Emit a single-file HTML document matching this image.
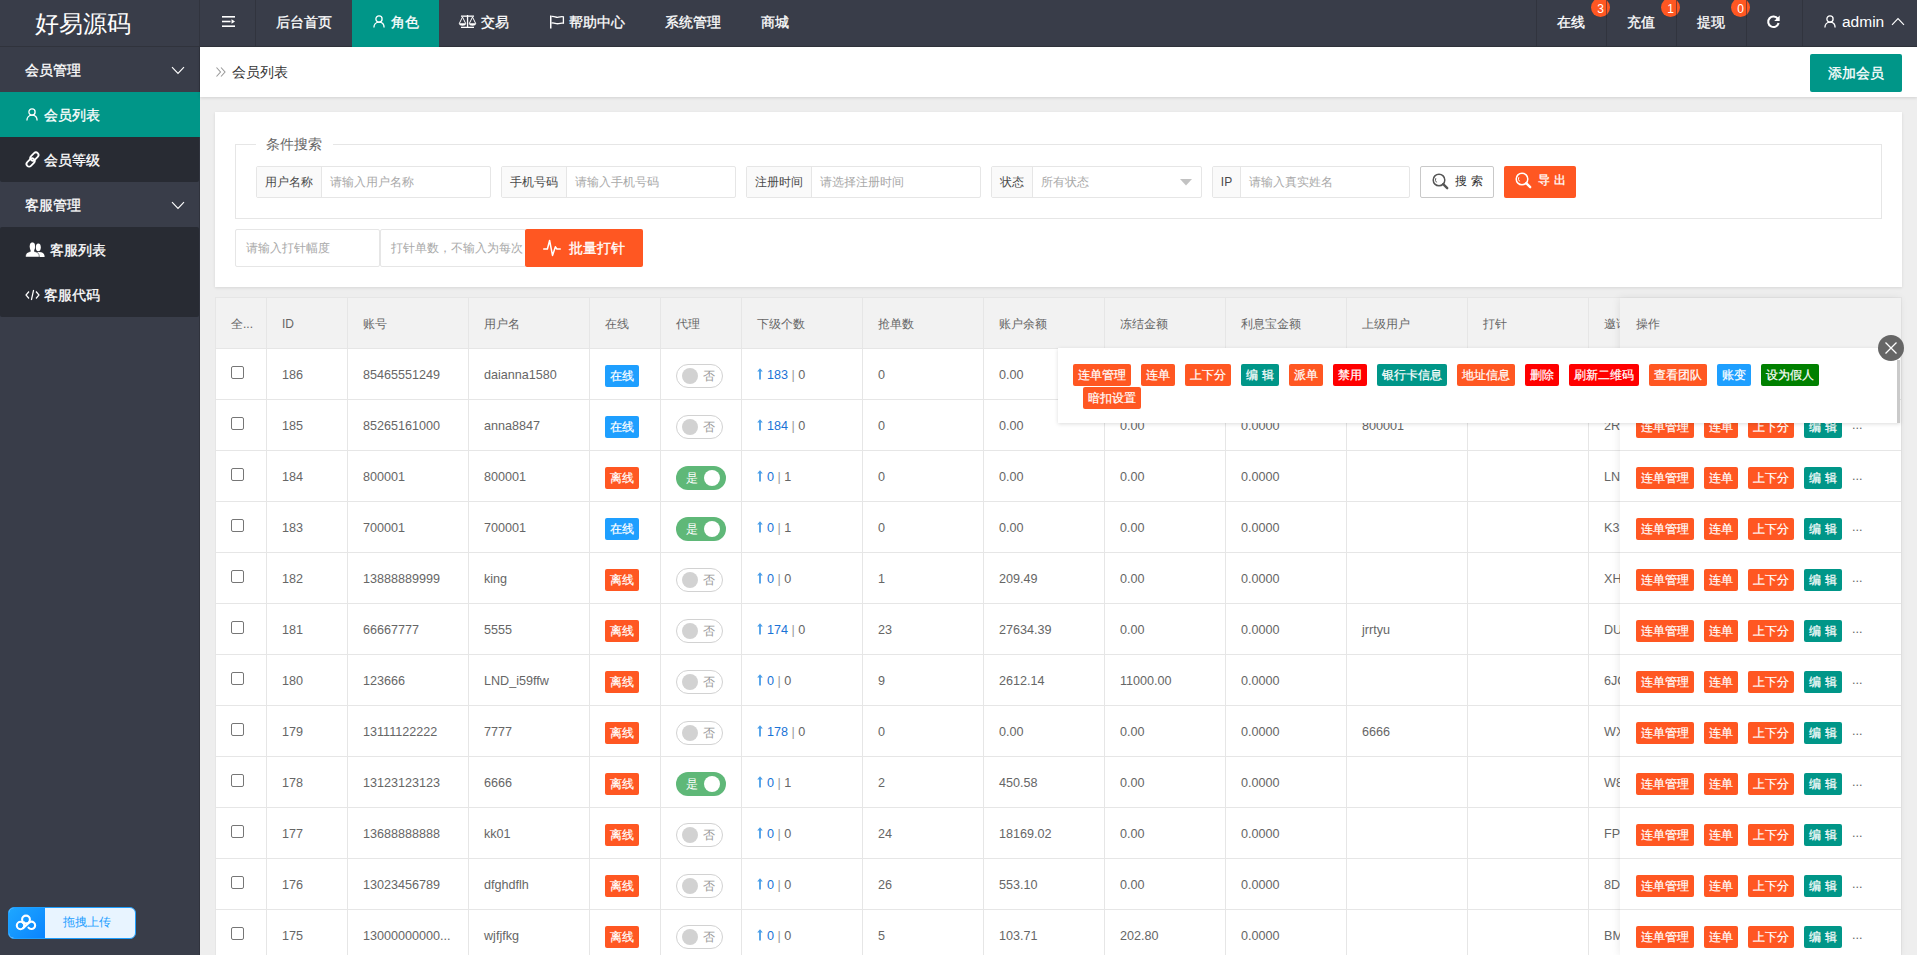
<!DOCTYPE html><html><head><meta charset="utf-8"><style>
*{box-sizing:border-box;margin:0;padding:0}
html,body{width:1917px;height:955px;overflow:hidden}
body{font-family:"Liberation Sans",sans-serif;font-size:14px;color:#666;background:#eeeeee;position:relative}
.A{position:absolute;white-space:nowrap}
.vl{position:absolute;top:0;width:1px;height:46px;background:#31343e}
.nt{position:absolute;color:#fff;font-size:14px;line-height:16px;white-space:nowrap;-webkit-text-stroke:0.3px #fff}
.bdg{position:absolute;top:-2px;width:19px;height:19px;border-radius:50%;background:#FF5722;color:#fff;font-size:12px;line-height:14px;padding-top:4px;text-align:center}
.si{position:absolute;left:0;width:199px;height:45px}
.st{position:absolute;color:#fff;font-size:14px;line-height:16px;white-space:nowrap;-webkit-text-stroke:0.3px #fff}
.inp{position:absolute;height:32px;border:1px solid #e6e6e6;border-radius:2px;background:#fff}
.lab{position:absolute;left:0;top:0;height:30px;background:#FAFAFA;border-right:1px solid #e6e6e6;color:#4a4a4a;font-size:12px;line-height:30px;text-align:center}
.ph{position:absolute;color:#a9a9a9;font-size:12px;line-height:30px;white-space:nowrap}
.hl{position:absolute;height:1px;background:#e6e6e6}
.vv{position:absolute;width:1px;background:#e6e6e6}
.td{position:absolute;font-size:12.6px;color:#666;line-height:16px;white-space:nowrap}
.th{position:absolute;font-size:12px;color:#666;line-height:16px;white-space:nowrap}
.cb{position:absolute;width:13px;height:13px;border:1px solid #767676;border-radius:2px;background:#fff}
.tag{position:absolute;width:34px;height:22px;border-radius:2px;color:#fff;font-size:12px;line-height:22px;text-align:center;-webkit-text-stroke:0.2px #fff}
.sw{position:absolute;height:24px;border-radius:12px}
.sw.off{border:1px solid #d2d2d2;background:#fff}
.sw.on{background:#5FB878}
.knob{position:absolute;width:16px;height:16px;border-radius:50%;top:4px}
.swt{position:absolute;font-size:12px;line-height:14px;top:5px}
.btn{position:absolute;height:22px;border-radius:2px;color:#fff;font-size:12px;line-height:22px;text-align:center;white-space:nowrap;-webkit-text-stroke:0.2px #fff}
.o{background:#FF5722}.g{background:#009688}.r{background:#FF0000}.b{background:#1E9FFF}.dg{background:#008000}
</style></head><body>
<div class="A" style="left:0;top:0;width:1917px;height:47px;background:#393D49;border-bottom:1px solid #30333c"></div>
<div class="A" style="left:35px;top:11px;color:#fff;font-size:24px;line-height:26px">好易源码</div>
<div class="vl" style="left:199px"></div>
<div class="vl" style="left:255px"></div>
<div class="vl" style="left:1536px"></div>
<div class="vl" style="left:1606px"></div>
<div class="vl" style="left:1676px"></div>
<div class="vl" style="left:1746px"></div>
<div class="vl" style="left:1802px"></div>
<svg class="A" style="left:221px;top:15px" width="15" height="13" viewBox="0 0 15 13"><rect x="1" y="1" width="13" height="1.6" fill="#fff"/><rect x="1" y="5.7" width="8.5" height="1.6" fill="#fff"/><path d="M10.5 4.2 L14 6.5 L10.5 8.8Z" fill="#fff"/><rect x="1" y="10.4" width="13" height="1.6" fill="#fff"/></svg>
<div class="A" style="left:352px;top:0;width:87px;height:47px;background:#009688"></div>
<div class="nt" style="left:276px;top:14px">后台首页</div>
<svg class="A" style="left:373px;top:15px" width="12" height="13" viewBox="0 0 12 13"><circle cx="6" cy="4" r="3.1" fill="none" stroke="#fff" stroke-width="1.3"/><path d="M0.9 12.6 C0.9 9.2 3 7.2 6 7.2 C9 7.2 11.1 9.2 11.1 12.6" fill="none" stroke="#fff" stroke-width="1.3"/></svg>
<div class="nt" style="left:391px;top:14px">角色</div>
<svg class="A" style="left:458px;top:14px" width="19" height="15" viewBox="0 0 19 15"><rect x="3" y="1.5" width="13" height="1.3" fill="#fff"/><rect x="8.9" y="1" width="1.3" height="12.5" fill="#fff"/><rect x="3" y="12.7" width="13" height="1.3" fill="#fff"/><path d="M4.5 3 L1.3 9.5 M4.5 3 L7.7 9.5 M14.5 3 L11.3 9.5 M14.5 3 L17.7 9.5" stroke="#fff" stroke-width="1" fill="none"/><path d="M0.8 9.3 H8.2 C8 11 6.5 11.8 4.5 11.8 C2.5 11.8 1 11 0.8 9.3Z M10.8 9.3 H18.2 C18 11 16.5 11.8 14.5 11.8 C12.5 11.8 11 11 10.8 9.3Z" fill="#fff"/></svg>
<div class="nt" style="left:481px;top:14px">交易</div>
<svg class="A" style="left:549px;top:15px" width="16" height="14" viewBox="0 0 16 14"><rect x="1" y="0.5" width="1.5" height="13" fill="#fff"/><path d="M2.5 1.6 C5 0.5 7 3 9.5 2.2 C11 1.8 12.5 1.5 14.4 1.8 V8.2 C12.5 7.8 11 8.2 9.5 8.6 C7 9.4 5 7 2.5 8.1" fill="none" stroke="#fff" stroke-width="1.3"/></svg>
<div class="nt" style="left:569px;top:14px">帮助中心</div>
<div class="nt" style="left:665px;top:14px">系统管理</div>
<div class="nt" style="left:761px;top:14px">商城</div>
<div class="nt" style="left:1557px;top:14px">在线</div>
<div class="bdg" style="left:1591px">3</div>
<div class="nt" style="left:1627px;top:14px">充值</div>
<div class="bdg" style="left:1661px">1</div>
<div class="nt" style="left:1697px;top:14px">提现</div>
<div class="bdg" style="left:1731px">0</div>
<div class="vl" style="left:1606px;top:0;height:18px;background:rgba(40,43,52,.55)"></div>
<div class="vl" style="left:1676px;top:0;height:18px;background:rgba(40,43,52,.55)"></div>
<div class="vl" style="left:1746px;top:0;height:18px;background:rgba(40,43,52,.55)"></div>
<svg class="A" style="left:1766px;top:14px" width="15" height="15" viewBox="0 0 16 16"><path d="M12.6 5.2 A5.6 5.6 0 1 0 13.4 9.6" fill="none" stroke="#fff" stroke-width="2.2"/><path d="M14.6 1.5 V7.4 H8.7Z" fill="#fff"/></svg>
<svg class="A" style="left:1824px;top:15px" width="12" height="13" viewBox="0 0 12 13"><circle cx="6" cy="4" r="3.1" fill="none" stroke="#fff" stroke-width="1.3"/><path d="M0.9 12.6 C0.9 9.2 3 7.2 6 7.2 C9 7.2 11.1 9.2 11.1 12.6" fill="none" stroke="#fff" stroke-width="1.3"/></svg>
<div class="A" style="left:1842px;top:13px;color:#fff;font-size:15.5px;line-height:18px">admin</div>
<svg class="A" style="left:1891px;top:17px" width="14" height="9" viewBox="0 0 14 9"><path d="M1 7.8 L7 1.6 L13 7.8" fill="none" stroke="#fff" stroke-width="1.15"/></svg>
<div class="A" style="left:0;top:47px;width:199px;height:908px;background:#393D49"></div>
<div class="A" style="left:199px;top:47px;width:1px;height:908px;background:#30333d"></div>
<div class="si" style="top:92px;width:200px;background:#009688"></div>
<div class="si" style="top:137px;background:#282B33;border-radius:0 0 2px 2px"></div>
<div class="si" style="top:227px;height:90px;background:#282B33;border-radius:2px"></div>
<div class="st" style="left:25px;top:62px">会员管理</div>
<div class="st" style="left:44px;top:107px">会员列表</div>
<div class="st" style="left:44px;top:152px">会员等级</div>
<div class="st" style="left:25px;top:197px">客服管理</div>
<div class="st" style="left:50px;top:242px">客服列表</div>
<div class="st" style="left:44px;top:287px">客服代码</div>
<svg class="A" style="left:171px;top:66px" width="14" height="9" viewBox="0 0 14 9"><path d="M1 1.2 L7 7.4 L13 1.2" fill="none" stroke="#fff" stroke-width="1.15"/></svg>
<svg class="A" style="left:171px;top:201px" width="14" height="9" viewBox="0 0 14 9"><path d="M1 1.2 L7 7.4 L13 1.2" fill="none" stroke="#fff" stroke-width="1.15"/></svg>
<svg class="A" style="left:26px;top:108px" width="12" height="13" viewBox="0 0 12 13"><circle cx="6" cy="4" r="3.1" fill="none" stroke="#fff" stroke-width="1.3"/><path d="M0.9 12.6 C0.9 9.2 3 7.2 6 7.2 C9 7.2 11.1 9.2 11.1 12.6" fill="none" stroke="#fff" stroke-width="1.3"/></svg>
<svg class="A" style="left:24px;top:150.5px;overflow:visible" width="17" height="17" viewBox="0 0 17 17"><g fill="none" stroke="#fff" stroke-width="1.8" transform="rotate(-45 8.5 8.5)"><rect x="0.3" y="6.7" width="9.4" height="5.2" rx="2.6"/><rect x="7.3" y="5.1" width="9.4" height="5.2" rx="2.6"/></g></svg>
<svg class="A" style="left:25px;top:242px" width="20" height="16" viewBox="0 0 20 16"><ellipse cx="13.3" cy="5.3" rx="2.5" ry="3.9" fill="#fff"/><path d="M9.5 15 C9.5 11.6 11 9.9 14 9.9 C18 9.9 19.6 11.6 19.6 15Z" fill="#fff"/><ellipse cx="7.4" cy="4.6" rx="2.7" ry="4.1" fill="#fff" stroke="#282B33" stroke-width="0.7"/><path d="M0.5 15.1 C0.5 11.4 2.3 9.4 7.4 9.4 C12.5 9.4 14.3 11.4 14.3 15.1Z" fill="#fff" stroke="#282B33" stroke-width="0.6"/><ellipse cx="7.4" cy="4.6" rx="2.6" ry="4" fill="#fff"/><rect x="5.6" y="7" width="3.6" height="3.5" fill="#fff"/></svg>
<svg class="A" style="left:25px;top:289px" width="15" height="12" viewBox="0 0 15 12"><path d="M4 2.5 L1 6 L4 9.5 M11 2.5 L14 6 L11 9.5 M8.6 1 L6.4 11" fill="none" stroke="#fff" stroke-width="1.2"/></svg>
<div class="A" style="left:8px;top:907px;width:128px;height:32px;border:1px solid #1E9FFF;border-radius:6px;background:#E8F4FF;overflow:hidden"><div class="A" style="left:0;top:0;width:36px;height:30px;background:linear-gradient(135deg,#1EA7FF,#0A84FF)"></div></div>
<svg class="A" style="left:10px;top:908px" width="34" height="30" viewBox="0 0 34 30"><g fill="none" stroke="#fff" stroke-width="2.1" stroke-linecap="round"><circle cx="16" cy="11.5" r="3.9"/><circle cx="10.5" cy="17.5" r="3.7"/><path d="M18.5 19.6 A3.7 3.7 0 1 0 18.3 15.4 L13.1 20.1"/><path d="M12.6 14.8 L14.2 14.2 M19.2 13.6 L19.8 14.6" stroke-width="1.6"/></g></svg>
<div class="A" style="left:63px;top:915px;color:#1E9FFF;font-size:12px;line-height:14px">拖拽上传</div>
<div class="A" style="left:200px;top:47px;width:1717px;height:50px;background:#fff;box-shadow:0 1px 3px rgba(0,0,0,.12)"></div>
<svg class="A" style="left:215px;top:66px" width="12" height="12" viewBox="0 0 12 12"><path d="M1.5 1.5 L5.5 6 L1.5 10.5 M6 1.5 L10 6 L6 10.5" fill="none" stroke="#999" stroke-width="1.1"/></svg>
<div class="A" style="left:232px;top:64px;color:#333;font-size:14px;line-height:16px">会员列表</div>
<div class="A g" style="left:1810px;top:54px;width:92px;height:38px;border-radius:2px;color:#fff;font-size:14px;line-height:38px;text-align:center;-webkit-text-stroke:0.3px #fff">添加会员</div>
<div class="A" style="left:215px;top:112px;width:1687px;height:175px;background:#fff;box-shadow:0 1px 3px rgba(0,0,0,.1)"></div>
<div class="A" style="left:235px;top:144px;width:1647px;height:75px;border:1px solid #e6e6e6"></div>
<div class="A" style="left:256px;top:136px;width:77px;height:16px;background:#fff"></div>
<div class="A" style="left:266px;top:136px;color:#666;font-size:14px;line-height:16px">条件搜索</div>
<div class="inp" style="left:256px;top:166px;width:235px"><div class="lab" style="width:65px">用户名称</div><div class="ph" style="left:73px;top:0">请输入用户名称</div></div>
<div class="inp" style="left:501px;top:166px;width:235px"><div class="lab" style="width:65px">手机号码</div><div class="ph" style="left:73px;top:0">请输入手机号码</div></div>
<div class="inp" style="left:746px;top:166px;width:235px"><div class="lab" style="width:65px">注册时间</div><div class="ph" style="left:73px;top:0">请选择注册时间</div></div>
<div class="inp" style="left:991px;top:166px;width:211px"><div class="lab" style="width:41px">状态</div><div class="ph" style="left:49px;top:0">所有状态</div></div>
<svg class="A" style="left:1180px;top:179px" width="12" height="7" viewBox="0 0 12 7"><path d="M0 0 H12 L6 6.5Z" fill="#c2c2c2"/></svg>
<div class="inp" style="left:1212px;top:166px;width:198px"><div class="lab" style="width:28px">IP</div><div class="ph" style="left:36px;top:0">请输入真实姓名</div></div>
<div class="A" style="left:1420px;top:166px;width:74px;height:32px;border:1px solid #c9c9c9;border-radius:2px;background:#fff"></div>
<svg class="A" style="left:1432px;top:173px" width="17" height="17" viewBox="0 0 17 17"><g fill="none" stroke="#555"><circle cx="7" cy="7" r="5.8" stroke-width="1.5"/><path d="M3.8 5.2 A3.6 3.6 0 0 0 4.6 9.4" stroke-width="1"/><path d="M11.2 11.2 L15.2 15.2" stroke-width="2.4" stroke-linecap="round"/></g></svg>
<div class="A" style="left:1455px;top:174px;color:#333;font-size:12px;line-height:14px;letter-spacing:4px">搜索</div>
<div class="A o" style="left:1504px;top:166px;width:72px;height:32px;border-radius:2px"></div>
<svg class="A" style="left:1515px;top:172px" width="17" height="17" viewBox="0 0 17 17"><g fill="none" stroke="#fff"><circle cx="7" cy="7" r="5.8" stroke-width="1.5"/><path d="M3.8 5.2 A3.6 3.6 0 0 0 4.6 9.4" stroke-width="1"/><path d="M11.2 11.2 L15.2 15.2" stroke-width="2.4" stroke-linecap="round"/></g></svg>
<div class="A" style="left:1538px;top:173px;color:#fff;font-size:12px;line-height:14px;letter-spacing:4px;-webkit-text-stroke:0.3px #fff">导出</div>
<div class="A" style="left:235px;top:229px;width:145px;height:38px;border:1px solid #e6e6e6;border-radius:2px;background:#fff"></div>
<div class="A" style="left:246px;top:241px;color:#a9a9a9;font-size:12px;line-height:14px">请输入打针幅度</div>
<div class="A" style="left:380px;top:229px;width:146px;height:38px;border:1px solid #e6e6e6;border-radius:2px;background:#fff;overflow:hidden"><div class="A" style="left:10px;top:11px;color:#a9a9a9;font-size:12px;line-height:14px">打针单数，不输入为每次</div></div>
<div class="A o" style="left:525px;top:229px;width:118px;height:38px;border-radius:2px"></div>
<svg class="A" style="left:543px;top:239px" width="18" height="18" viewBox="0 0 18 18"><path d="M0.7 10 H4.4 L6.6 1.5 L9.5 16.4 L12.4 7.8 L13.9 10 H17.3" fill="none" stroke="#fff" stroke-width="1.5" stroke-linejoin="round" stroke-linecap="round"/></svg>
<div class="A" style="left:569px;top:240px;color:#fff;font-size:14px;line-height:16px;-webkit-text-stroke:0.3px #fff">批量打针</div>
<div class="A" style="left:215px;top:297px;width:1687px;height:658px;background:#fff;border:1px solid #e6e6e6;border-bottom:none"></div>
<div class="A" style="left:216px;top:298px;width:1685px;height:50px;background:#F2F2F2"></div>
<div class="vv" style="left:266px;top:298px;height:658px"></div>
<div class="vv" style="left:347px;top:298px;height:658px"></div>
<div class="vv" style="left:468px;top:298px;height:658px"></div>
<div class="vv" style="left:589px;top:298px;height:658px"></div>
<div class="vv" style="left:660px;top:298px;height:658px"></div>
<div class="vv" style="left:741px;top:298px;height:658px"></div>
<div class="vv" style="left:862px;top:298px;height:658px"></div>
<div class="vv" style="left:983px;top:298px;height:658px"></div>
<div class="vv" style="left:1104px;top:298px;height:658px"></div>
<div class="vv" style="left:1225px;top:298px;height:658px"></div>
<div class="vv" style="left:1346px;top:298px;height:658px"></div>
<div class="vv" style="left:1467px;top:298px;height:658px"></div>
<div class="vv" style="left:1588px;top:298px;height:658px"></div>
<div class="hl" style="left:216px;top:348px;width:1685px"></div>
<div class="hl" style="left:216px;top:399px;width:1685px"></div>
<div class="hl" style="left:216px;top:450px;width:1685px"></div>
<div class="hl" style="left:216px;top:501px;width:1685px"></div>
<div class="hl" style="left:216px;top:552px;width:1685px"></div>
<div class="hl" style="left:216px;top:603px;width:1685px"></div>
<div class="hl" style="left:216px;top:654px;width:1685px"></div>
<div class="hl" style="left:216px;top:705px;width:1685px"></div>
<div class="hl" style="left:216px;top:756px;width:1685px"></div>
<div class="hl" style="left:216px;top:807px;width:1685px"></div>
<div class="hl" style="left:216px;top:858px;width:1685px"></div>
<div class="hl" style="left:216px;top:909px;width:1685px"></div>
<div class="th" style="left:231px;top:316px">全...</div>
<div class="th" style="left:282px;top:316px">ID</div>
<div class="th" style="left:363px;top:316px">账号</div>
<div class="th" style="left:484px;top:316px">用户名</div>
<div class="th" style="left:605px;top:316px">在线</div>
<div class="th" style="left:676px;top:316px">代理</div>
<div class="th" style="left:757px;top:316px">下级个数</div>
<div class="th" style="left:878px;top:316px">抢单数</div>
<div class="th" style="left:999px;top:316px">账户余额</div>
<div class="th" style="left:1120px;top:316px">冻结金额</div>
<div class="th" style="left:1241px;top:316px">利息宝金额</div>
<div class="th" style="left:1362px;top:316px">上级用户</div>
<div class="th" style="left:1483px;top:316px">打针</div>
<div class="th" style="left:1604px;top:316px">邀请码</div>
<div class="cb" style="left:231px;top:366px"></div>
<div class="td" style="left:282px;top:367px">186</div>
<div class="td" style="left:363px;top:367px">85465551249</div>
<div class="td" style="left:484px;top:367px">daianna1580</div>
<div class="td" style="left:878px;top:367px">0</div>
<div class="td" style="left:999px;top:367px">0.00</div>
<div class="td" style="left:1120px;top:367px">0.00</div>
<div class="td" style="left:1241px;top:367px">0.0000</div>
<div class="td" style="left:1604px;top:367px">Y2</div>
<div class="tag b" style="left:605px;top:365px">在线</div>
<div class="sw off" style="left:676px;top:364px;width:47px"><div class="knob" style="left:5px;top:3px;background:#d2d2d2"></div><div class="swt" style="left:26px;top:4px;color:#999">否</div></div>
<svg class="A" style="left:757px;top:368px" width="6" height="12" viewBox="0 0 6 12"><path d="M3 0.3 L5.8 3.6 H3.9 V11.5 H2.1 V3.6 H0.2Z" fill="#4a9ee8"/></svg>
<div class="td" style="left:767px;top:367px"><span style="color:#1a73d6">183</span> <span style="color:#999">|</span> 0</div>
<div class="cb" style="left:231px;top:417px"></div>
<div class="td" style="left:282px;top:418px">185</div>
<div class="td" style="left:363px;top:418px">85265161000</div>
<div class="td" style="left:484px;top:418px">anna8847</div>
<div class="td" style="left:878px;top:418px">0</div>
<div class="td" style="left:999px;top:418px">0.00</div>
<div class="td" style="left:1120px;top:418px">0.00</div>
<div class="td" style="left:1241px;top:418px">0.0000</div>
<div class="td" style="left:1362px;top:418px">800001</div>
<div class="td" style="left:1604px;top:418px">2R</div>
<div class="tag b" style="left:605px;top:416px">在线</div>
<div class="sw off" style="left:676px;top:415px;width:47px"><div class="knob" style="left:5px;top:3px;background:#d2d2d2"></div><div class="swt" style="left:26px;top:4px;color:#999">否</div></div>
<svg class="A" style="left:757px;top:419px" width="6" height="12" viewBox="0 0 6 12"><path d="M3 0.3 L5.8 3.6 H3.9 V11.5 H2.1 V3.6 H0.2Z" fill="#4a9ee8"/></svg>
<div class="td" style="left:767px;top:418px"><span style="color:#1a73d6">184</span> <span style="color:#999">|</span> 0</div>
<div class="cb" style="left:231px;top:468px"></div>
<div class="td" style="left:282px;top:469px">184</div>
<div class="td" style="left:363px;top:469px">800001</div>
<div class="td" style="left:484px;top:469px">800001</div>
<div class="td" style="left:878px;top:469px">0</div>
<div class="td" style="left:999px;top:469px">0.00</div>
<div class="td" style="left:1120px;top:469px">0.00</div>
<div class="td" style="left:1241px;top:469px">0.0000</div>
<div class="td" style="left:1604px;top:469px">LN</div>
<div class="tag o" style="left:605px;top:467px">离线</div>
<div class="sw on" style="left:676px;top:466px;width:50px"><div class="swt" style="left:10px;color:#fff">是</div><div class="knob" style="left:28px;background:#fff"></div></div>
<svg class="A" style="left:757px;top:470px" width="6" height="12" viewBox="0 0 6 12"><path d="M3 0.3 L5.8 3.6 H3.9 V11.5 H2.1 V3.6 H0.2Z" fill="#4a9ee8"/></svg>
<div class="td" style="left:767px;top:469px"><span style="color:#1a73d6">0</span> <span style="color:#999">|</span> 1</div>
<div class="cb" style="left:231px;top:519px"></div>
<div class="td" style="left:282px;top:520px">183</div>
<div class="td" style="left:363px;top:520px">700001</div>
<div class="td" style="left:484px;top:520px">700001</div>
<div class="td" style="left:878px;top:520px">0</div>
<div class="td" style="left:999px;top:520px">0.00</div>
<div class="td" style="left:1120px;top:520px">0.00</div>
<div class="td" style="left:1241px;top:520px">0.0000</div>
<div class="td" style="left:1604px;top:520px">K3</div>
<div class="tag b" style="left:605px;top:518px">在线</div>
<div class="sw on" style="left:676px;top:517px;width:50px"><div class="swt" style="left:10px;color:#fff">是</div><div class="knob" style="left:28px;background:#fff"></div></div>
<svg class="A" style="left:757px;top:521px" width="6" height="12" viewBox="0 0 6 12"><path d="M3 0.3 L5.8 3.6 H3.9 V11.5 H2.1 V3.6 H0.2Z" fill="#4a9ee8"/></svg>
<div class="td" style="left:767px;top:520px"><span style="color:#1a73d6">0</span> <span style="color:#999">|</span> 1</div>
<div class="cb" style="left:231px;top:570px"></div>
<div class="td" style="left:282px;top:571px">182</div>
<div class="td" style="left:363px;top:571px">13888889999</div>
<div class="td" style="left:484px;top:571px">king</div>
<div class="td" style="left:878px;top:571px">1</div>
<div class="td" style="left:999px;top:571px">209.49</div>
<div class="td" style="left:1120px;top:571px">0.00</div>
<div class="td" style="left:1241px;top:571px">0.0000</div>
<div class="td" style="left:1604px;top:571px">XH</div>
<div class="tag o" style="left:605px;top:569px">离线</div>
<div class="sw off" style="left:676px;top:568px;width:47px"><div class="knob" style="left:5px;top:3px;background:#d2d2d2"></div><div class="swt" style="left:26px;top:4px;color:#999">否</div></div>
<svg class="A" style="left:757px;top:572px" width="6" height="12" viewBox="0 0 6 12"><path d="M3 0.3 L5.8 3.6 H3.9 V11.5 H2.1 V3.6 H0.2Z" fill="#4a9ee8"/></svg>
<div class="td" style="left:767px;top:571px"><span style="color:#1a73d6">0</span> <span style="color:#999">|</span> 0</div>
<div class="cb" style="left:231px;top:621px"></div>
<div class="td" style="left:282px;top:622px">181</div>
<div class="td" style="left:363px;top:622px">66667777</div>
<div class="td" style="left:484px;top:622px">5555</div>
<div class="td" style="left:878px;top:622px">23</div>
<div class="td" style="left:999px;top:622px">27634.39</div>
<div class="td" style="left:1120px;top:622px">0.00</div>
<div class="td" style="left:1241px;top:622px">0.0000</div>
<div class="td" style="left:1362px;top:622px">jrrtyu</div>
<div class="td" style="left:1604px;top:622px">DU</div>
<div class="tag o" style="left:605px;top:620px">离线</div>
<div class="sw off" style="left:676px;top:619px;width:47px"><div class="knob" style="left:5px;top:3px;background:#d2d2d2"></div><div class="swt" style="left:26px;top:4px;color:#999">否</div></div>
<svg class="A" style="left:757px;top:623px" width="6" height="12" viewBox="0 0 6 12"><path d="M3 0.3 L5.8 3.6 H3.9 V11.5 H2.1 V3.6 H0.2Z" fill="#4a9ee8"/></svg>
<div class="td" style="left:767px;top:622px"><span style="color:#1a73d6">174</span> <span style="color:#999">|</span> 0</div>
<div class="cb" style="left:231px;top:672px"></div>
<div class="td" style="left:282px;top:673px">180</div>
<div class="td" style="left:363px;top:673px">123666</div>
<div class="td" style="left:484px;top:673px">LND_i59ffw</div>
<div class="td" style="left:878px;top:673px">9</div>
<div class="td" style="left:999px;top:673px">2612.14</div>
<div class="td" style="left:1120px;top:673px">11000.00</div>
<div class="td" style="left:1241px;top:673px">0.0000</div>
<div class="td" style="left:1604px;top:673px">6JC</div>
<div class="tag o" style="left:605px;top:671px">离线</div>
<div class="sw off" style="left:676px;top:670px;width:47px"><div class="knob" style="left:5px;top:3px;background:#d2d2d2"></div><div class="swt" style="left:26px;top:4px;color:#999">否</div></div>
<svg class="A" style="left:757px;top:674px" width="6" height="12" viewBox="0 0 6 12"><path d="M3 0.3 L5.8 3.6 H3.9 V11.5 H2.1 V3.6 H0.2Z" fill="#4a9ee8"/></svg>
<div class="td" style="left:767px;top:673px"><span style="color:#1a73d6">0</span> <span style="color:#999">|</span> 0</div>
<div class="cb" style="left:231px;top:723px"></div>
<div class="td" style="left:282px;top:724px">179</div>
<div class="td" style="left:363px;top:724px">13111122222</div>
<div class="td" style="left:484px;top:724px">7777</div>
<div class="td" style="left:878px;top:724px">0</div>
<div class="td" style="left:999px;top:724px">0.00</div>
<div class="td" style="left:1120px;top:724px">0.00</div>
<div class="td" style="left:1241px;top:724px">0.0000</div>
<div class="td" style="left:1362px;top:724px">6666</div>
<div class="td" style="left:1604px;top:724px">WX</div>
<div class="tag o" style="left:605px;top:722px">离线</div>
<div class="sw off" style="left:676px;top:721px;width:47px"><div class="knob" style="left:5px;top:3px;background:#d2d2d2"></div><div class="swt" style="left:26px;top:4px;color:#999">否</div></div>
<svg class="A" style="left:757px;top:725px" width="6" height="12" viewBox="0 0 6 12"><path d="M3 0.3 L5.8 3.6 H3.9 V11.5 H2.1 V3.6 H0.2Z" fill="#4a9ee8"/></svg>
<div class="td" style="left:767px;top:724px"><span style="color:#1a73d6">178</span> <span style="color:#999">|</span> 0</div>
<div class="cb" style="left:231px;top:774px"></div>
<div class="td" style="left:282px;top:775px">178</div>
<div class="td" style="left:363px;top:775px">13123123123</div>
<div class="td" style="left:484px;top:775px">6666</div>
<div class="td" style="left:878px;top:775px">2</div>
<div class="td" style="left:999px;top:775px">450.58</div>
<div class="td" style="left:1120px;top:775px">0.00</div>
<div class="td" style="left:1241px;top:775px">0.0000</div>
<div class="td" style="left:1604px;top:775px">W8</div>
<div class="tag o" style="left:605px;top:773px">离线</div>
<div class="sw on" style="left:676px;top:772px;width:50px"><div class="swt" style="left:10px;color:#fff">是</div><div class="knob" style="left:28px;background:#fff"></div></div>
<svg class="A" style="left:757px;top:776px" width="6" height="12" viewBox="0 0 6 12"><path d="M3 0.3 L5.8 3.6 H3.9 V11.5 H2.1 V3.6 H0.2Z" fill="#4a9ee8"/></svg>
<div class="td" style="left:767px;top:775px"><span style="color:#1a73d6">0</span> <span style="color:#999">|</span> 1</div>
<div class="cb" style="left:231px;top:825px"></div>
<div class="td" style="left:282px;top:826px">177</div>
<div class="td" style="left:363px;top:826px">13688888888</div>
<div class="td" style="left:484px;top:826px">kk01</div>
<div class="td" style="left:878px;top:826px">24</div>
<div class="td" style="left:999px;top:826px">18169.02</div>
<div class="td" style="left:1120px;top:826px">0.00</div>
<div class="td" style="left:1241px;top:826px">0.0000</div>
<div class="td" style="left:1604px;top:826px">FPC</div>
<div class="tag o" style="left:605px;top:824px">离线</div>
<div class="sw off" style="left:676px;top:823px;width:47px"><div class="knob" style="left:5px;top:3px;background:#d2d2d2"></div><div class="swt" style="left:26px;top:4px;color:#999">否</div></div>
<svg class="A" style="left:757px;top:827px" width="6" height="12" viewBox="0 0 6 12"><path d="M3 0.3 L5.8 3.6 H3.9 V11.5 H2.1 V3.6 H0.2Z" fill="#4a9ee8"/></svg>
<div class="td" style="left:767px;top:826px"><span style="color:#1a73d6">0</span> <span style="color:#999">|</span> 0</div>
<div class="cb" style="left:231px;top:876px"></div>
<div class="td" style="left:282px;top:877px">176</div>
<div class="td" style="left:363px;top:877px">13023456789</div>
<div class="td" style="left:484px;top:877px">dfghdflh</div>
<div class="td" style="left:878px;top:877px">26</div>
<div class="td" style="left:999px;top:877px">553.10</div>
<div class="td" style="left:1120px;top:877px">0.00</div>
<div class="td" style="left:1241px;top:877px">0.0000</div>
<div class="td" style="left:1604px;top:877px">8D</div>
<div class="tag o" style="left:605px;top:875px">离线</div>
<div class="sw off" style="left:676px;top:874px;width:47px"><div class="knob" style="left:5px;top:3px;background:#d2d2d2"></div><div class="swt" style="left:26px;top:4px;color:#999">否</div></div>
<svg class="A" style="left:757px;top:878px" width="6" height="12" viewBox="0 0 6 12"><path d="M3 0.3 L5.8 3.6 H3.9 V11.5 H2.1 V3.6 H0.2Z" fill="#4a9ee8"/></svg>
<div class="td" style="left:767px;top:877px"><span style="color:#1a73d6">0</span> <span style="color:#999">|</span> 0</div>
<div class="cb" style="left:231px;top:927px"></div>
<div class="td" style="left:282px;top:928px">175</div>
<div class="td" style="left:363px;top:928px">13000000000...</div>
<div class="td" style="left:484px;top:928px">wjfjfkg</div>
<div class="td" style="left:878px;top:928px">5</div>
<div class="td" style="left:999px;top:928px">103.71</div>
<div class="td" style="left:1120px;top:928px">202.80</div>
<div class="td" style="left:1241px;top:928px">0.0000</div>
<div class="td" style="left:1604px;top:928px">BM</div>
<div class="tag o" style="left:605px;top:926px">离线</div>
<div class="sw off" style="left:676px;top:925px;width:47px"><div class="knob" style="left:5px;top:3px;background:#d2d2d2"></div><div class="swt" style="left:26px;top:4px;color:#999">否</div></div>
<svg class="A" style="left:757px;top:929px" width="6" height="12" viewBox="0 0 6 12"><path d="M3 0.3 L5.8 3.6 H3.9 V11.5 H2.1 V3.6 H0.2Z" fill="#4a9ee8"/></svg>
<div class="td" style="left:767px;top:928px"><span style="color:#1a73d6">0</span> <span style="color:#999">|</span> 0</div>
<div class="A" style="left:1620px;top:298px;width:281px;height:658px;background:#fff;box-shadow:-1px 0 8px rgba(0,0,0,.08)"></div>
<div class="A" style="left:1620px;top:298px;width:281px;height:50px;background:#F2F2F2"></div>
<div class="hl" style="left:1620px;top:348px;width:281px"></div>
<div class="hl" style="left:1620px;top:399px;width:281px"></div>
<div class="hl" style="left:1620px;top:450px;width:281px"></div>
<div class="hl" style="left:1620px;top:501px;width:281px"></div>
<div class="hl" style="left:1620px;top:552px;width:281px"></div>
<div class="hl" style="left:1620px;top:603px;width:281px"></div>
<div class="hl" style="left:1620px;top:654px;width:281px"></div>
<div class="hl" style="left:1620px;top:705px;width:281px"></div>
<div class="hl" style="left:1620px;top:756px;width:281px"></div>
<div class="hl" style="left:1620px;top:807px;width:281px"></div>
<div class="hl" style="left:1620px;top:858px;width:281px"></div>
<div class="hl" style="left:1620px;top:909px;width:281px"></div>
<div class="th" style="left:1636px;top:316px">操作</div>
<div class="btn o" style="left:1636px;top:365px;width:58px">连单管理</div>
<div class="btn o" style="left:1704px;top:365px;width:34px">连单</div>
<div class="btn o" style="left:1748px;top:365px;width:46px">上下分</div>
<div class="btn g" style="left:1804px;top:365px;width:38px">编&nbsp;辑</div>
<div class="td" style="left:1852px;top:366px;color:#666">...</div>
<div class="btn o" style="left:1636px;top:416px;width:58px">连单管理</div>
<div class="btn o" style="left:1704px;top:416px;width:34px">连单</div>
<div class="btn o" style="left:1748px;top:416px;width:46px">上下分</div>
<div class="btn g" style="left:1804px;top:416px;width:38px">编&nbsp;辑</div>
<div class="td" style="left:1852px;top:417px;color:#666">...</div>
<div class="btn o" style="left:1636px;top:467px;width:58px">连单管理</div>
<div class="btn o" style="left:1704px;top:467px;width:34px">连单</div>
<div class="btn o" style="left:1748px;top:467px;width:46px">上下分</div>
<div class="btn g" style="left:1804px;top:467px;width:38px">编&nbsp;辑</div>
<div class="td" style="left:1852px;top:468px;color:#666">...</div>
<div class="btn o" style="left:1636px;top:518px;width:58px">连单管理</div>
<div class="btn o" style="left:1704px;top:518px;width:34px">连单</div>
<div class="btn o" style="left:1748px;top:518px;width:46px">上下分</div>
<div class="btn g" style="left:1804px;top:518px;width:38px">编&nbsp;辑</div>
<div class="td" style="left:1852px;top:519px;color:#666">...</div>
<div class="btn o" style="left:1636px;top:569px;width:58px">连单管理</div>
<div class="btn o" style="left:1704px;top:569px;width:34px">连单</div>
<div class="btn o" style="left:1748px;top:569px;width:46px">上下分</div>
<div class="btn g" style="left:1804px;top:569px;width:38px">编&nbsp;辑</div>
<div class="td" style="left:1852px;top:570px;color:#666">...</div>
<div class="btn o" style="left:1636px;top:620px;width:58px">连单管理</div>
<div class="btn o" style="left:1704px;top:620px;width:34px">连单</div>
<div class="btn o" style="left:1748px;top:620px;width:46px">上下分</div>
<div class="btn g" style="left:1804px;top:620px;width:38px">编&nbsp;辑</div>
<div class="td" style="left:1852px;top:621px;color:#666">...</div>
<div class="btn o" style="left:1636px;top:671px;width:58px">连单管理</div>
<div class="btn o" style="left:1704px;top:671px;width:34px">连单</div>
<div class="btn o" style="left:1748px;top:671px;width:46px">上下分</div>
<div class="btn g" style="left:1804px;top:671px;width:38px">编&nbsp;辑</div>
<div class="td" style="left:1852px;top:672px;color:#666">...</div>
<div class="btn o" style="left:1636px;top:722px;width:58px">连单管理</div>
<div class="btn o" style="left:1704px;top:722px;width:34px">连单</div>
<div class="btn o" style="left:1748px;top:722px;width:46px">上下分</div>
<div class="btn g" style="left:1804px;top:722px;width:38px">编&nbsp;辑</div>
<div class="td" style="left:1852px;top:723px;color:#666">...</div>
<div class="btn o" style="left:1636px;top:773px;width:58px">连单管理</div>
<div class="btn o" style="left:1704px;top:773px;width:34px">连单</div>
<div class="btn o" style="left:1748px;top:773px;width:46px">上下分</div>
<div class="btn g" style="left:1804px;top:773px;width:38px">编&nbsp;辑</div>
<div class="td" style="left:1852px;top:774px;color:#666">...</div>
<div class="btn o" style="left:1636px;top:824px;width:58px">连单管理</div>
<div class="btn o" style="left:1704px;top:824px;width:34px">连单</div>
<div class="btn o" style="left:1748px;top:824px;width:46px">上下分</div>
<div class="btn g" style="left:1804px;top:824px;width:38px">编&nbsp;辑</div>
<div class="td" style="left:1852px;top:825px;color:#666">...</div>
<div class="btn o" style="left:1636px;top:875px;width:58px">连单管理</div>
<div class="btn o" style="left:1704px;top:875px;width:34px">连单</div>
<div class="btn o" style="left:1748px;top:875px;width:46px">上下分</div>
<div class="btn g" style="left:1804px;top:875px;width:38px">编&nbsp;辑</div>
<div class="td" style="left:1852px;top:876px;color:#666">...</div>
<div class="btn o" style="left:1636px;top:926px;width:58px">连单管理</div>
<div class="btn o" style="left:1704px;top:926px;width:34px">连单</div>
<div class="btn o" style="left:1748px;top:926px;width:46px">上下分</div>
<div class="btn g" style="left:1804px;top:926px;width:38px">编&nbsp;辑</div>
<div class="td" style="left:1852px;top:927px;color:#666">...</div>
<div class="A" style="left:1058px;top:348px;width:842px;height:75px;background:#fff;box-shadow:0 1px 4px rgba(0,0,0,.14)"></div>
<div class="btn o" style="left:1073px;top:364px;width:58px">连单管理</div>
<div class="btn o" style="left:1141px;top:364px;width:34px">连单</div>
<div class="btn o" style="left:1185px;top:364px;width:46px">上下分</div>
<div class="btn g" style="left:1241px;top:364px;width:38px">编&nbsp;辑</div>
<div class="btn o" style="left:1289px;top:364px;width:34px">派单</div>
<div class="btn r" style="left:1333px;top:364px;width:34px">禁用</div>
<div class="btn g" style="left:1377px;top:364px;width:70px">银行卡信息</div>
<div class="btn o" style="left:1457px;top:364px;width:58px">地址信息</div>
<div class="btn r" style="left:1525px;top:364px;width:34px">删除</div>
<div class="btn r" style="left:1569px;top:364px;width:70px">刷新二维码</div>
<div class="btn o" style="left:1649px;top:364px;width:58px">查看团队</div>
<div class="btn b" style="left:1717px;top:364px;width:34px">账变</div>
<div class="btn dg" style="left:1761px;top:364px;width:58px">设为假人</div>
<div class="btn o" style="left:1083px;top:387px;width:58px">暗扣设置</div>
<div class="A" style="left:1897px;top:360px;width:3px;height:63px;background:#cacaca"></div>
<div class="A" style="left:1878px;top:335px;width:26px;height:26px;border-radius:50%;background:#666"></div>
<svg class="A" style="left:1884px;top:341px" width="14" height="14" viewBox="0 0 14 14"><path d="M1.5 1.5 L12.5 12.5 M12.5 1.5 L1.5 12.5" stroke="#fff" stroke-width="1.3"/></svg>
</body></html>
